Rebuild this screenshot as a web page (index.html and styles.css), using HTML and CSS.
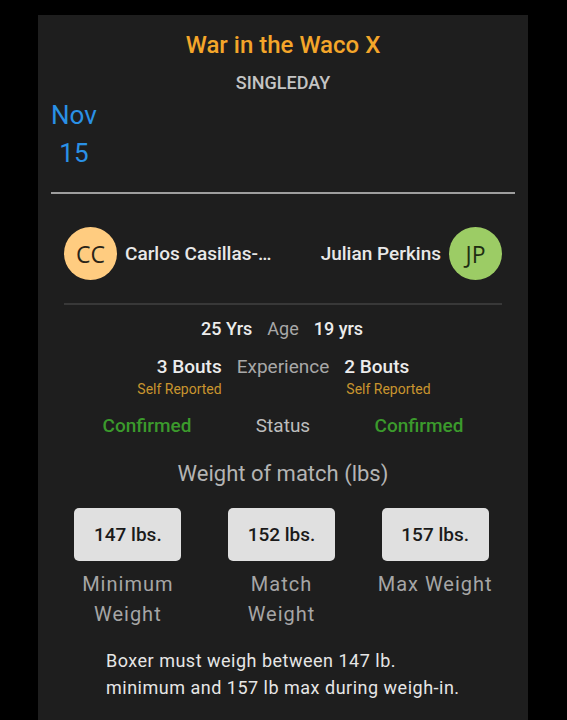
FILE: index.html
```html
<!DOCTYPE html>
<html lang="en">
<head>
    <meta charset="UTF-8">
    <meta name="viewport" content="width=device-width, initial-scale=1.0">
    <title>War in the Waco X</title>
    <link rel="stylesheet" href="styles.css">
</head>
<body>
    <div class="card">
        <h1 class="event-title">War in the Waco X</h1>
        <div class="event-type">SINGLEDAY</div>
        <div class="event-date">
            <div>Nov</div>
            <div>15</div>
        </div>
        <hr class="divider">

        <div class="fighters">
            <div class="fighter">
                <div class="avatar avatar-red">CC</div>
                <span class="fighter-name">Carlos Casillas-…</span>
            </div>
            <div class="fighter">
                <span class="fighter-name">Julian Perkins</span>
                <div class="avatar avatar-blue">JP</div>
            </div>
        </div>
        <hr class="divider-thin">

        <div class="stat-row">
            <div class="stat-left">25 Yrs</div>
            <div class="stat-label">Age</div>
            <div class="stat-right">19 yrs</div>
        </div>
        <div class="stat-row stat-exp">
            <div class="stat-left">
                3 Bouts
                <div class="self-reported">Self Reported</div>
            </div>
            <div class="stat-label">Experience</div>
            <div class="stat-right">
                2 Bouts
                <div class="self-reported">Self Reported</div>
            </div>
        </div>
        <div class="status-row">
            <div class="confirmed">Confirmed</div>
            <div class="stat-label">Status</div>
            <div class="confirmed">Confirmed</div>
        </div>

        <div class="weight-title">Weight of match (lbs)</div>
        <div class="weights">
            <div class="weight">
                <div class="weight-box">147 lbs.</div>
                <div class="weight-label">Minimum Weight</div>
            </div>
            <div class="weight">
                <div class="weight-box">152 lbs.</div>
                <div class="weight-label">Match Weight</div>
            </div>
            <div class="weight">
                <div class="weight-box">157 lbs.</div>
                <div class="weight-label">Max Weight</div>
            </div>
        </div>

        <p class="weigh-note">Boxer must weigh between 147 lb. minimum and 157 lb max during weigh-in.</p>
    </div>
</body>
</html>
```

FILE: styles.css
```css
body {
    margin: 0;
    background-color: #000;
    font-family: Roboto, "Liberation Sans", sans-serif;
}

.card {
    margin: 15px 39px 0 38px;
    padding: 16px 13px 40px;
    background-color: #1e1e1e;
    min-height: 700px;
}

.event-title {
    margin: 0;
    font-size: 24px;
    line-height: 28px;
    font-weight: 500;
    color: #f4a62a;
    text-align: center;
}

.event-type {
    margin-top: 12px;
    font-size: 18px;
    line-height: 24px;
    font-weight: 500;
    color: #c4c4c4;
    text-align: center;
}

.event-date {
    display: inline-block;
    margin-top: 1px;
    font-size: 26px;
    line-height: 38px;
    color: #2a91e6;
    text-align: center;
}

.divider {
    margin: 20px 0 0;
    border: none;
    border-top: 2px solid #9e9e9e;
}

/* fighters */
.fighters {
    display: flex;
    justify-content: space-between;
    align-items: center;
    margin: 33px 13px 0;
}

.fighter {
    display: flex;
    align-items: center;
    gap: 8px;
}

.avatar {
    width: 53px;
    height: 53px;
    border-radius: 50%;
    display: flex;
    justify-content: center;
    align-items: center;
    font-family: "Open Sans", sans-serif;
    font-size: 23px;
    color: #2a2418;
}

.avatar-red {
    background-color: #ffcc80;
}

.avatar-blue {
    background-color: #9ccc65;
    color: #1f2e12;
}

.fighter-name {
    font-size: 19px;
    font-weight: 500;
    color: #e8e8e8;
}

.divider-thin {
    margin: 23px 13px 0;
    border: none;
    border-top: 2px solid #383838;
}

/* stats */
.stat-row {
    display: grid;
    grid-template-columns: 1fr auto 1fr;
    column-gap: 15px;
    margin-top: 12px;
    font-size: 18px;
    line-height: 24px;
}

.stat-exp {
    margin-top: 14px;
    font-size: 19px;
}

.stat-left,
.stat-right {
    font-weight: 500;
    color: #ececec;
}

.stat-left {
    text-align: right;
}

.stat-right {
    text-align: left;
}

.stat-label {
    color: #a8a8a8;
}

.self-reported {
    margin-top: 1px;
    font-size: 14px;
    line-height: 18px;
    font-weight: 400;
    color: #c9952e;
}

.stat-right .self-reported {
    padding-left: 2px;
}

.status-row {
    display: grid;
    grid-template-columns: repeat(3, 136px);
    justify-content: center;
    margin-top: 16px;
    font-size: 19px;
    line-height: 24px;
    text-align: center;
}

.confirmed {
    font-weight: 500;
    color: #3b9a2c;
}

.status-row .stat-label {
    color: #bdbdbd;
}

/* weights */
.weight-title {
    margin-top: 22px;
    font-size: 22px;
    line-height: 28px;
    color: #b4b4b4;
    text-align: center;
}

.weights {
    display: grid;
    grid-template-columns: repeat(3, 1fr);
    margin-top: 20px;
    padding-right: 3px;
}

.weight {
    display: flex;
    flex-direction: column;
    align-items: center;
}

.weight-box {
    width: 107px;
    height: 53px;
    border-radius: 5px;
    background-color: #e0e0e0;
    display: flex;
    justify-content: center;
    align-items: center;
    font-size: 19px;
    font-weight: 500;
    color: #1a1a1a;
}

.weight-label {
    width: 120px;
    margin-top: 8px;
    font-size: 20px;
    line-height: 30px;
    letter-spacing: 1px;
    color: #a6a6a6;
    text-align: center;
}

.weigh-note {
    width: 362px;
    margin: 18px 0 0 55px;
    font-size: 18px;
    line-height: 27px;
    letter-spacing: 0.5px;
    color: #e6e6e6;
}
```
